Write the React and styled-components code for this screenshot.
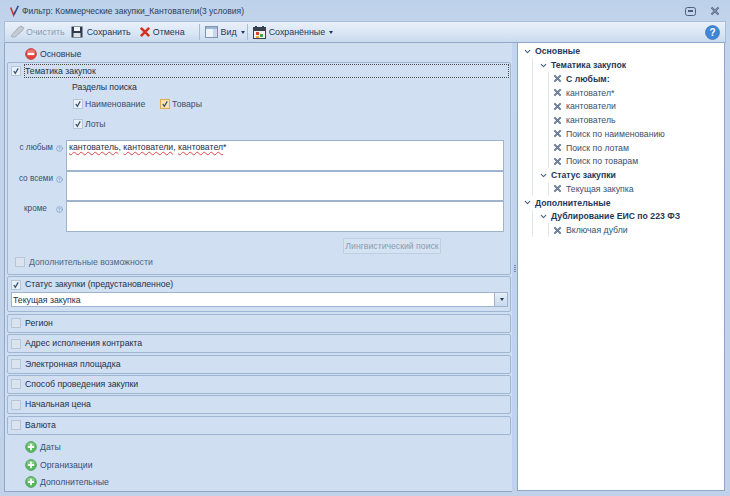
import React from 'react';
import styled, { createGlobalStyle } from 'styled-components';
import { ChevronDown, HelpCircle } from 'lucide-react';

const Global = createGlobalStyle`
  html, body { margin: 0; padding: 0; }
  body { width: 730px; height: 496px; overflow: hidden; background: #bfd2e9; }
  * { box-sizing: border-box; }
`;

const Win = styled.div`
  width: 730px;
  height: 496px;
  display: flex;
  flex-direction: column;
  padding: 0 4px 4px;
  background: linear-gradient(180deg, #bdd1ea 0, #c3d5eb 30px, #bfd2e9 100%);
  font-family: "Liberation Sans", sans-serif;
  font-size: 8.7px;
  color: #1e395b;
`;

const TitleBar = styled.div`
  height: 21px;
  flex: none;
  display: flex;
  align-items: center;
  gap: 2px;
  padding: 1px 2px 0 5px;
  font-size: 8.5px;
  color: #2a3f5c;
`;

const TitleText = styled.span`
  flex: 1;
`;

const WinBtn = styled.span`
  width: 12px;
  height: 12px;
  display: flex;
  align-items: center;
  justify-content: center;
  margin-left: 8px;
  margin-right: 3px;
`;

const Toolbar = styled.div`
  height: 22px;
  flex: none;
  display: flex;
  align-items: center;
  padding-left: 5px;
  border: 1px solid #a9bfd9;
  border-bottom-color: #8fa8c8;
  background: linear-gradient(180deg, #e9f0f9 0, #dbe7f5 50%, #c9daee 100%);
`;

const ToolBtn = styled.div`
  display: flex;
  align-items: center;
  gap: ${p => p.$inner ?? 3}px;
  margin-right: ${p => p.$gap ?? 8}px;
  font-size: 8.9px;
  color: ${p => (p.$off ? '#8b9cb2' : '#1e395b')};
`;

const Sep = styled.div`
  width: 1px;
  height: 16px;
  margin-right: 5px;
  background: #a9bcd4;
`;

const Caret = styled.span`
  width: 0;
  height: 0;
  margin-left: 1px;
  border-left: 2.5px solid transparent;
  border-right: 2.5px solid transparent;
  border-top: 3px solid #1e395b;
`;

const Help = styled.div`
  margin-left: auto;
  margin-right: 5px;
  display: flex;
`;

const Body = styled.div`
  flex: 1;
  min-height: 0;
  display: flex;
`;

const LeftPane = styled.div`
  width: 508px;
  flex: none;
  padding: 0 1px 0 2px;
  border-left: 1px solid #8fa8c8;
  border-bottom: 1px solid #8fa8c8;
  background: #cfdef0;
  display: flex;
  flex-direction: column;
`;

const Splitter = styled.div`
  width: 5px;
  flex: none;
  display: flex;
  flex-direction: column;
  align-items: center;
  justify-content: center;
  gap: 1px;
  padding-top: 2px;
`;

const Grip = styled.span`
  width: 2px;
  height: 1px;
  background: #6f87a8;
`;

const RightPane = styled.div`
  flex: 1;
  margin: 0 1px 1px 0;
  padding: 1.5px 0 0 5px;
  background: #fff;
  border: 1px solid #8fa8c8;
  border-top: none;
`;

const SectionLink = styled.div`
  height: ${p => p.$h}px;
  flex: none;
  display: flex;
  align-items: center;
  gap: 3px;
  padding-left: 18px;
  padding-top: ${p => p.$pt || 0}px;
  color: ${p => (p.$soft ? '#35507a' : '#1e395b')};
`;

const Group = styled.div`
  flex: none;
  margin-bottom: 1.4px;
  border: 1px solid #9fb6d3;
  border-radius: 2px;
  background: #d0dff1;
`;

const GroupHead = styled.div`
  height: ${p => p.$h || 17}px;
  display: flex;
  align-items: center;
  gap: 4px;
  padding-left: 3px;
`;

const Check = styled.span`
  width: 10px;
  height: 10px;
  flex: none;
  display: flex;
  align-items: center;
  justify-content: center;
  border: 1px solid ${p => (p.$hot ? '#e5a94c' : '#b7c5d8')};
  background: ${p => (p.$hot ? '#fbe3b0' : p.$off ? '#dbe3ee' : '#eaf0f7')};
`;

const HeadLabel = styled.span`
  flex: ${p => (p.$focus ? 1 : 'none')};
  line-height: 12px;
  margin-top: -1px;
  outline: ${p => (p.$focus ? '1px dotted #4a4a4a' : 'none')};
  margin-right: ${p => (p.$focus ? 2 : 0)}px;
  color: #1e2f49;
`;

const TopicBody = styled.div`
  height: 195px;
  display: flex;
  flex-direction: column;
`;

const Sections = styled.div`
  padding: 1px 0 0 64px;
  display: flex;
  flex-direction: column;
`;

const SectionsTitle = styled.div`
  height: 14px;
  line-height: 14px;
  color: #1e2f49;
`;

const OptRow = styled.div`
  height: 20px;
  padding-left: 1px;
  display: flex;
  align-items: center;
`;

const Opt = styled.label`
  display: flex;
  align-items: center;
  gap: 2px;
  width: ${p => p.$w}px;
  color: #3a4f6e;
`;

const Fields = styled.div`
  margin-top: 6px;
  display: flex;
  flex-direction: column;
`;

const FieldRow = styled.div`
  display: flex;
  height: 30.7px;
`;

const FieldLabel = styled.div`
  width: 45px;
  flex: none;
  font-size: 8.2px;
  text-align: ${p => (p.$pad ? 'left' : 'right')};
  padding-left: ${p => (p.$pad ? 16 : 0)}px;
  padding-top: 3px;
  color: #3a4f6e;
  white-space: nowrap;
`;

const FieldHint = styled.div`
  width: 13px;
  flex: none;
  padding: 4px 0 0 3px;
  color: #6f93c4;
`;

const FieldBox = styled.div`
  width: 438px;
  padding: 0 2px;
  background: #fff;
  border: 1px solid #9fb3cf;
  color: #1e2f49;
  line-height: 13px;
`;

const Typo = styled.span`
  text-decoration: underline wavy #e0464a 1px;
  text-underline-offset: 1px;
`;

const LingRow = styled.div`
  display: flex;
  justify-content: flex-end;
  padding: 6px 69px 0 0;
`;

const LingBtn = styled.div`
  width: 98px;
  height: 16px;
  display: flex;
  align-items: center;
  justify-content: center;
  white-space: nowrap;
  border: 1px solid #bfcfe3;
  background: #d5e2f2;
  border-radius: 1px;
  color: #8b9cb2;
`;

const ExtraRow = styled.div`
  display: flex;
  align-items: center;
  gap: 4px;
  padding: 1px 0 0 7px;
  margin-top: 2px;
  color: #52668a;
`;

const Select = styled.div`
  height: 15px;
  margin: 0 2px 4px 3px;
  display: flex;
  background: #fff;
  border: 1px solid #9fb3cf;
  color: #1e2f49;
  line-height: 14px;
  padding-left: 1px;
`;

const SelectText = styled.span`
  flex: 1;
`;

const SelectBtn = styled.span`
  width: 13px;
  display: flex;
  align-items: center;
  justify-content: center;
  background: linear-gradient(180deg, #e6eef8, #c9d9ec);
  border-left: 1px solid #9fb3cf;
`;

const Links = styled.div`
  flex: 1;
  margin-top: 2px;
  display: flex;
  flex-direction: column;
`;

const TreeRow = styled.div`
  height: 13.75px;
  display: flex;
  align-items: center;
  gap: ${p => p.$gap ?? 2}px;
  white-space: nowrap;
  font-weight: ${p => (p.$bold ? 700 : 400)};
  color: ${p => (p.$bold ? '#1e395b' : '#3a4f6e')};
`;

const Chev = styled.span`
  width: 12px;
  height: 12px;
  flex: none;
  display: flex;
  align-items: center;
  color: #4d6486;
`;

const Nest = styled.div`
  margin-left: ${p => p.$ml}px;
  padding-left: ${p => p.$pl}px;
  border-left: 1px solid #dfe8f3;
`;

const Cross = ({ size = 9 }) => (
  <svg width={size} height={size} viewBox="0 0 10 10" style={{ flex: 'none' }}>
    <path d="M1.5 1.5 8.5 8.5M8.5 1.5 1.5 8.5" stroke="#5c6f8c" strokeWidth="2.2" />
    <path d="M2 2 8 8M8 2 2 8" stroke="#8496ae" strokeWidth=".8" />
  </svg>
);

const Tick = () => (
  <svg width="8" height="8" viewBox="0 0 9 9">
    <path d="M2 4.5 3.7 7 7 1.5" fill="none" stroke="#3a4f6e" strokeWidth="1.4" />
  </svg>
);

const Box = ({ on, off, hot }) => (
  <Check $hot={hot} $off={off}>{on && <Tick />}</Check>
);

const Round = ({ color, dark, children }) => (
  <svg width="12" height="12" viewBox="0 0 14 14" style={{ flex: 'none' }}>
    <circle cx="7" cy="7" r="6.3" fill={color} stroke={dark} strokeWidth=".8" />
    <ellipse cx="7" cy="4.4" rx="4.4" ry="2.6" fill="#fff" opacity=".28" />
    {children}
  </svg>
);

const MinusIcon = () => (
  <Round color="#e2433f" dark="#b72c2a">
    <rect x="3" y="5.7" width="8" height="2.6" fill="#fff" />
  </Round>
);

const PlusIcon = () => (
  <Round color="#55b85a" dark="#3a9a48">
    <path d="M7 3.2v7.6M3.2 7h7.6" stroke="#fff" strokeWidth="2.2" />
  </Round>
);

const EraserIcon = () => (
  <svg width="15" height="14" viewBox="0 0 15 14">
    <path d="M1 11 8 3l3-2 3 2-2 3-7 6H2Z" fill="#c4cad2" stroke="#a9b1bc" />
  </svg>
);

const SaveIcon = () => (
  <svg width="12" height="12" viewBox="0 0 12 12">
    <rect x=".5" y=".5" width="11" height="11" fill="#2f3b4d" />
    <rect x="3" y="1" width="6" height="4" fill="#f3f5f8" />
    <rect x="2.5" y="7" width="7" height="4" fill="#dde2e9" />
  </svg>
);

const CancelIcon = () => (
  <svg width="12" height="12" viewBox="0 0 13 13">
    <path d="M2 2 11 11M11 2 2 11" stroke="#d8301f" strokeWidth="2.8" />
  </svg>
);

const ViewIcon = () => (
  <svg width="13" height="12" viewBox="0 0 13 12">
    <rect x=".5" y=".5" width="12" height="11" fill="#eef3fa" stroke="#7d93b2" />
    <rect x="1" y="1" width="11" height="2" fill="#9db6d6" />
    <rect x="8" y="3" width="4" height="8" fill="#c9d9ec" />
  </svg>
);

const SavedIcon = () => (
  <svg width="13" height="13" viewBox="0 0 13 13">
    <rect x=".5" y="1.5" width="12" height="11" fill="#f2f2ee" stroke="#39414e" />
    <rect x="1" y="2" width="11" height="3" fill="#39414e" />
    <rect x="2" y="0" width="2" height="3" fill="#39414e" />
    <rect x="9" y="0" width="2" height="3" fill="#39414e" />
    <rect x="3" y="6" width="3" height="3" fill="#d8432f" />
    <rect x="7" y="8" width="3" height="3" fill="#4aa34f" />
    <rect x="3" y="10" width="3" height="2" fill="#e0ad3a" />
  </svg>
);

const LogoIcon = () => (
  <svg width="11" height="14" viewBox="0 0 13 14" style={{ flex: 'none' }}>
    <path d="M2 3 5.5 12 7 8" fill="none" stroke="#c8352b" strokeWidth="1.8" />
    <path d="M6 11 11 1" fill="none" stroke="#2d4f86" strokeWidth="1.8" />
  </svg>
);

const HelpCircleBlue = () => (
  <svg width="15" height="15" viewBox="0 0 15 15">
    <circle cx="7.5" cy="7.5" r="7" fill="#3f86d6" stroke="#2f6cb6" strokeWidth=".6" />
    <text x="7.5" y="11" textAnchor="middle" fontSize="10" fontWeight="700" fill="#fff" fontFamily="Liberation Sans, sans-serif">?</text>
  </svg>
);

const collapsed = ['Регион', 'Адрес исполнения контракта', 'Электронная площадка', 'Способ проведения закупки', 'Начальная цена', 'Валюта'];
const links = ['Даты', 'Организации', 'Дополнительные'];
const fields = [
  { label: 'с любым', value: true },
  { label: 'со всеми' },
  { label: 'кроме', pad: true },
];
const topicTerms = ['кантовател*', 'кантователи', 'кантователь', 'Поиск по наименованию', 'Поиск по лотам', 'Поиск по товарам'];

const Leaf = ({ text, bold }) => (
  <TreeRow $gap={4} $bold={bold}>
    <Cross />
    <span>{text}</span>
  </TreeRow>
);

const Branch = ({ text }) => (
  <TreeRow $gap={0} $bold>
    <Chev><ChevronDown size={9} strokeWidth={3} /></Chev>
    <span>{text}</span>
  </TreeRow>
);

export default function App() {
  return (
    <Win>
      <Global />
      <TitleBar>
        <LogoIcon />
        <TitleText>Фильтр: Коммерческие закупки_Кантователи(3 условия)</TitleText>
        <WinBtn>
          <svg width="11" height="9" viewBox="0 0 11 9"><rect x=".5" y=".5" width="10" height="8" rx="2" fill="none" stroke="#4d5f78" /><rect x="3" y="3" width="5" height="2" fill="#4d5f78" /></svg>
        </WinBtn>
        <WinBtn><Cross size={10} /></WinBtn>
      </TitleBar>
      <Toolbar>
        <ToolBtn $off $inner={1} $gap={6}><EraserIcon /><span>Очистить</span></ToolBtn>
        <ToolBtn $inner={4} $gap={8}><SaveIcon /><span>Сохранить</span></ToolBtn>
        <ToolBtn $inner={2} $gap={14}><CancelIcon /><span>Отмена</span></ToolBtn>
        <Sep />
        <ToolBtn $gap={2}><ViewIcon /><span>Вид</span><Caret /></ToolBtn>
        <Sep />
        <ToolBtn><SavedIcon /><span>Сохранённые</span><Caret /></ToolBtn>
        <Help><HelpCircleBlue /></Help>
      </Toolbar>
      <Body>
        <LeftPane>
          <SectionLink $h={19} $pt={2}><MinusIcon /><span>Основные</span></SectionLink>
          <Group>
            <GroupHead $h={16}>
              <Box on />
              <HeadLabel $focus>Тематика закупок</HeadLabel>
            </GroupHead>
            <TopicBody>
              <Sections>
                <SectionsTitle>Разделы поиска</SectionsTitle>
                <OptRow>
                  <Opt $w={87}><Box on /><span>Наименование</span></Opt>
                  <Opt><Box on hot /><span>Товары</span></Opt>
                </OptRow>
                <OptRow>
                  <Opt><Box on /><span>Лоты</span></Opt>
                </OptRow>
              </Sections>
              <Fields>
                {fields.map(f => (
                  <FieldRow key={f.label}>
                    <FieldLabel $pad={f.pad}>{f.label}</FieldLabel>
                    <FieldHint><HelpCircle size={7} /></FieldHint>
                    <FieldBox>
                      {f.value && (
                        <span><Typo>кантователь</Typo>, <Typo>кантователи</Typo>, <Typo>кантовател</Typo>*</span>
                      )}
                    </FieldBox>
                  </FieldRow>
                ))}
              </Fields>
              <LingRow><LingBtn>Лингвистический поиск</LingBtn></LingRow>
              <ExtraRow><Box off /><span>Дополнительные возможности</span></ExtraRow>
            </TopicBody>
          </Group>
          <Group>
            <GroupHead $h={15}>
              <Box on />
              <HeadLabel>Статус закупки (предустановленное)</HeadLabel>
            </GroupHead>
            <Select>
              <SelectText>Текущая закупка</SelectText>
              <SelectBtn><Caret /></SelectBtn>
            </Select>
          </Group>
          {collapsed.map(name => (
            <Group key={name}>
              <GroupHead>
                <Box off />
                <HeadLabel>{name}</HeadLabel>
              </GroupHead>
            </Group>
          ))}
          <Links>
            {links.map(l => (
              <SectionLink key={l} $h={17.7} $soft>
                <PlusIcon />
                <span>{l}</span>
              </SectionLink>
            ))}
          </Links>
        </LeftPane>
        <Splitter>
          <Grip /><Grip /><Grip /><Grip />
        </Splitter>
        <RightPane>
          <Branch text="Основные" />
          <Nest $ml={9} $pl={6}>
            <Branch text="Тематика закупок" />
            <Nest $ml={9} $pl={4}>
              <Leaf text="С любым:" bold />
              {topicTerms.map(t => <Leaf key={t} text={t} />)}
            </Nest>
            <Branch text="Статус закупки" />
            <Nest $ml={9} $pl={4}>
              <Leaf text="Текущая закупка" />
            </Nest>
          </Nest>
          <Branch text="Дополнительные" />
          <Nest $ml={9} $pl={6}>
            <Branch text="Дублирование ЕИС по 223 ФЗ" />
            <Nest $ml={9} $pl={4}>
              <Leaf text="Включая дубли" />
            </Nest>
          </Nest>
        </RightPane>
      </Body>
    </Win>
  );
}
